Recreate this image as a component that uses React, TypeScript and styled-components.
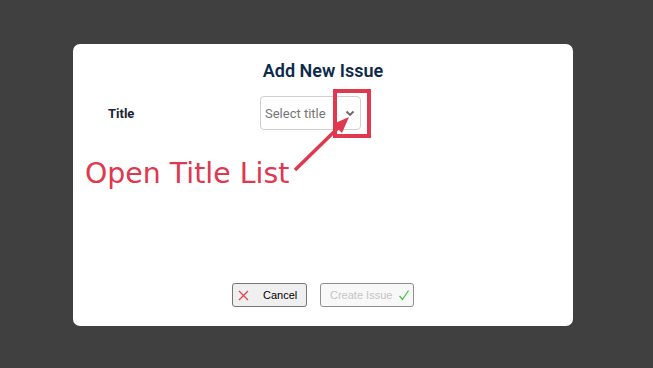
import * as React from "react";
import styled, { createGlobalStyle } from "styled-components";

const GlobalStyle = createGlobalStyle`
    html, body {
        margin: 0;
        padding: 0;
        background: #404040;
        font-family: Roboto, "Liberation Sans", sans-serif;
    }
`;

const StyledPage = styled.div`
    position: relative;
    width: 653px;
    height: 368px;
    padding: 44px 0 0 73px;
    box-sizing: border-box;
    overflow: hidden;
`;

const StyledModal = styled.div`
    width: 500px;
    height: 282px;
    background: #fff;
    border-radius: 7px;
    display: flex;
    flex-direction: column;
    box-sizing: border-box;
    padding: 16px 0 19px;
`;

const StyledHeading = styled.h2`
    margin: 0;
    text-align: center;
    font-size: 18px;
    line-height: 22px;
    font-weight: 600;
    color: #0c2b4b;
`;

const StyledFormRow = styled.div`
    display: grid;
    grid-template-columns: 152px auto;
    align-items: center;
    padding: 14px 0 0 35px;
`;

const StyledLabel = styled.label`
    font-size: 13px;
    font-weight: 700;
    color: #1b2233;
`;

const StyledSelect = styled.div`
    width: 101px;
    height: 34px;
    box-sizing: border-box;
    border: 1px solid #d0d0d0;
    border-radius: 4px;
    display: flex;
    align-items: center;
    justify-content: space-between;
    padding: 0 5px 0 4px;
`;

const StyledPlaceholder = styled.span`
    font-size: 13px;
    color: #767676;
    white-space: nowrap;
`;

const StyledSpacer = styled.div`
    flex: 1;
`;

const StyledActions = styled.div`
    display: flex;
    justify-content: center;
    gap: 13px;
`;

const StyledButton = styled.button<{ $disabled?: boolean }>`
    height: 24px;
    box-sizing: border-box;
    display: flex;
    align-items: center;
    border-radius: 3px;
    font-family: "Liberation Sans", Arial, sans-serif;
    font-size: 11px;
    white-space: nowrap;
    padding: 0;
    border: 1px solid ${(p) => (p.$disabled ? "#8f8f8f" : "#767676")};
    background: ${(p) => (p.$disabled ? "#f8f8f8" : "#efefef")};
    color: ${(p) => (p.$disabled ? "#c4c4c4" : "#000")};
`;

const StyledCancel = styled(StyledButton)`
    width: 75px;
    padding-left: 5px;
    gap: 14px;
`;

const StyledCreate = styled(StyledButton)`
    width: 94px;
    padding-left: 9px;
    gap: 6px;
`;

const StyledNote = styled.div`
    position: absolute;
    left: 85px;
    top: 157px;
    font-family: "DejaVu Sans", Verdana, sans-serif;
    font-size: 28.4px;
    line-height: 34px;
    color: #e0384f;
    white-space: nowrap;
`;

const StyledOverlay = styled.svg`
    position: absolute;
    left: 0;
    top: 0;
    pointer-events: none;
`;

export default function App() {
    return (
        <>
            <GlobalStyle />
            <StyledPage>
                <StyledModal>
                    <StyledHeading>Add New Issue</StyledHeading>
                    <StyledFormRow>
                        <StyledLabel>Title</StyledLabel>
                        <StyledSelect>
                            <StyledPlaceholder>Select title</StyledPlaceholder>
                            <svg width="10" height="8" viewBox="0 0 10 8">
                                <path d="M1.5 2.5 L5 6 L8.5 2.5" fill="none" stroke="#666" strokeWidth="1.8" />
                            </svg>
                        </StyledSelect>
                    </StyledFormRow>
                    <StyledSpacer />
                    <StyledActions>
                        <StyledCancel>
                            <svg width="11" height="11" viewBox="0 0 11 11">
                                <path d="M1 1 L10 10 M10 1 L1 10" stroke="#e0474c" strokeWidth="1.3" />
                            </svg>
                            Cancel
                        </StyledCancel>
                        <StyledCreate $disabled disabled>
                            Create Issue
                            <svg width="12" height="12" viewBox="0 0 12 12">
                                <path d="M1.5 7 L4.5 10.5 L10.5 1.5" fill="none" stroke="#4cc24c" strokeWidth="1.3" />
                            </svg>
                        </StyledCreate>
                    </StyledActions>
                </StyledModal>
                <StyledNote>Open Title List</StyledNote>
                <StyledOverlay width="653" height="368" viewBox="0 0 653 368">
                    <rect x="335" y="91" width="34" height="45" fill="none" stroke="#e0384f" strokeWidth="4" />
                    <path d="M295 170 L340 126" stroke="#e0384f" strokeWidth="3.5" />
                    <path d="M349 117 L333 124 L342 133 Z" fill="#e0384f" />
                </StyledOverlay>
            </StyledPage>
        </>
    );
}
